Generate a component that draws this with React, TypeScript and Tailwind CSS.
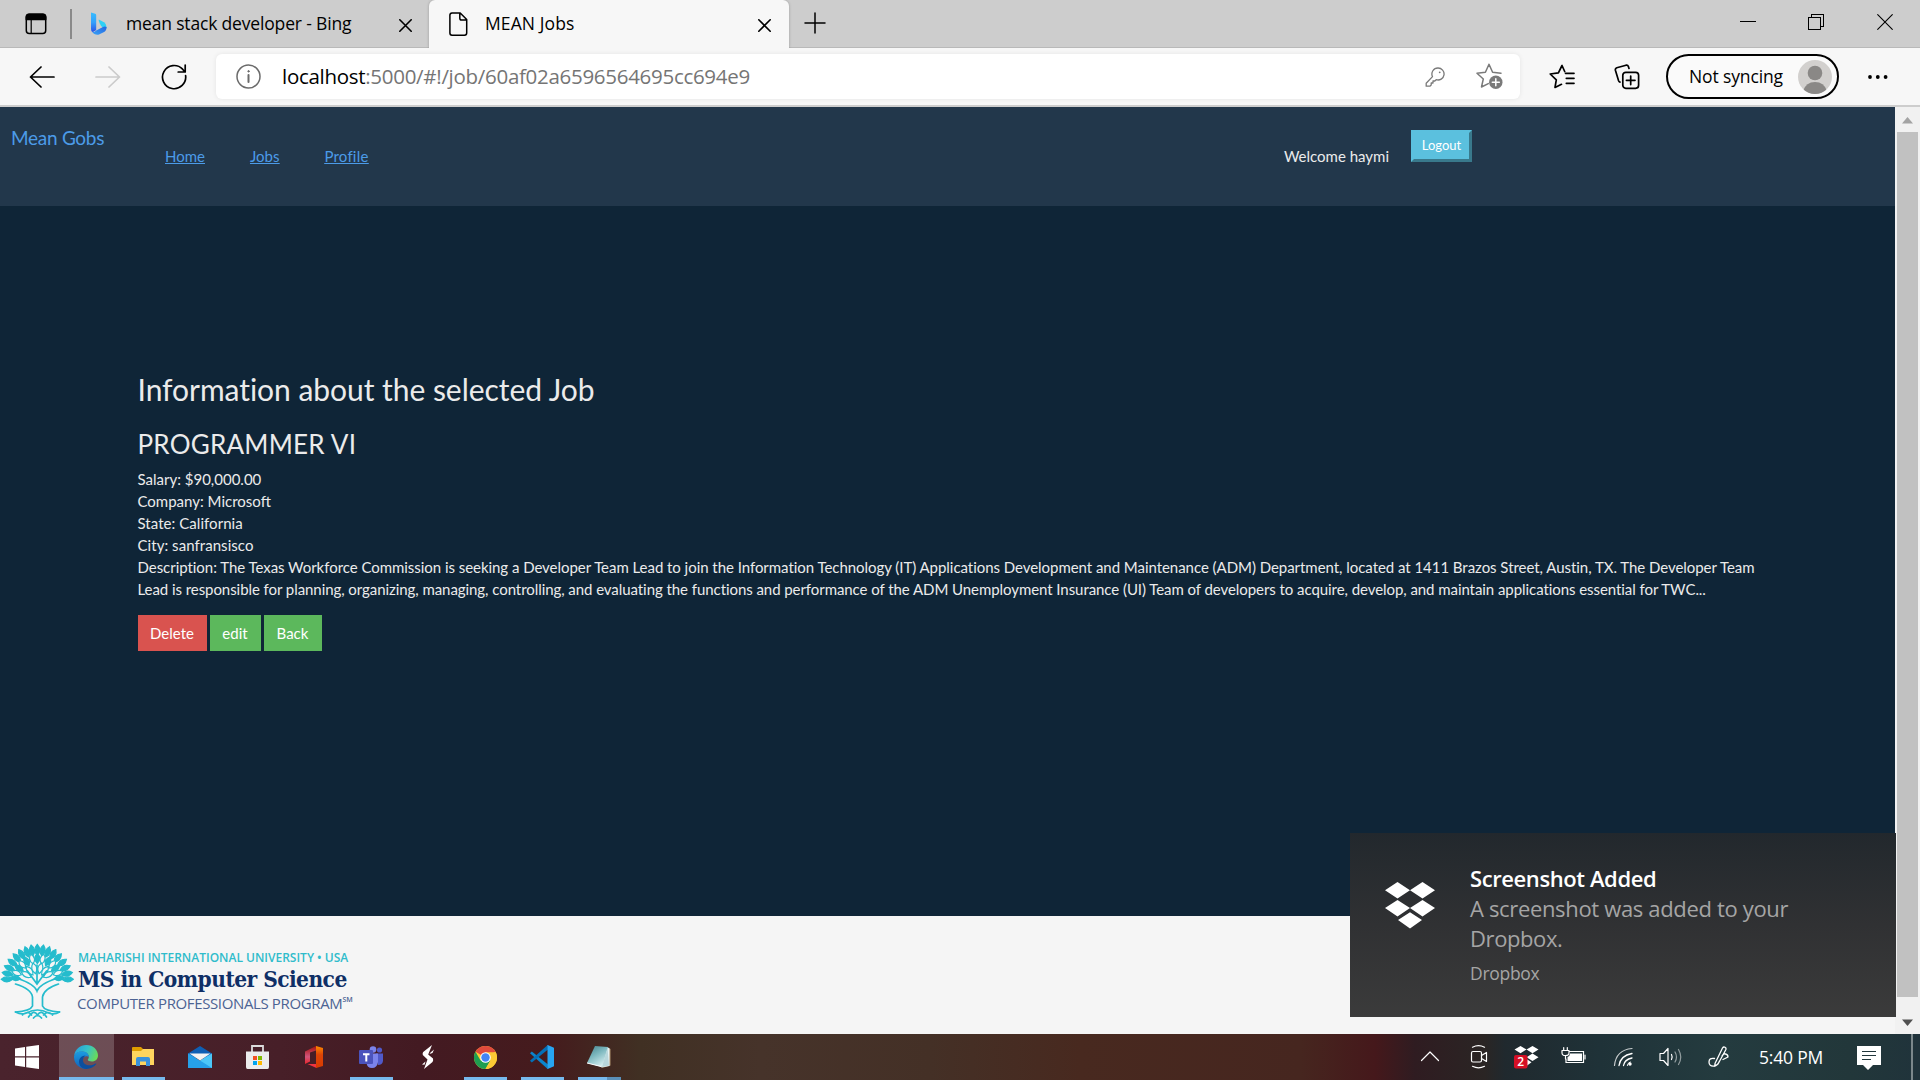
import type { ReactNode } from 'react';

type IconProps = { w: number; h: number; className?: string; children: ReactNode };

function Icon({ w, h, className = '', children }: IconProps) {
  return (
    <svg
      width={w}
      height={h}
      viewBox={`0 0 ${w} ${h}`}
      fill="none"
      stroke="currentColor"
      strokeWidth="1.5"
      strokeLinecap="round"
      strokeLinejoin="round"
      className={`block shrink-0 ${className}`}
    >
      {children}
    </svg>
  );
}

const CloseX = ({ className }: { className: string }) => (
  <Icon w={13} h={13} className={className}>
    <path d="M.8.8l11.4 11.4M12.2.8.8 12.2" strokeWidth="1.6" />
  </Icon>
);

function TabStrip() {
  return (
    <div className="flex h-[48px] shrink-0 bg-[#cdcdcd] text-black">
      <div className="flex h-full w-[429px] items-center border-b border-[#b9b9b9]">
        <Icon w={22} h={22} className="ml-[25px] mt-px">
          <rect x="1.3" y="1.3" width="19.4" height="19.2" rx="3" />
          <path d="M1.3 6.5V4a3 3 0 0 1 3-2.7h13.4a3 3 0 0 1 3 2.7v2.500z" fill="currentColor" />
          <path d="M6.2 7v13.500" strokeWidth="1.200" />
        </Icon>
        <div className="ml-[23px] h-[30px] w-[2px] bg-[#8a8a8a]" />
        <svg width="16" height="23" viewBox="0 0 16 23" className="ml-[19px] block shrink-0">
          <defs>
            <linearGradient id="bingStem" x1="0" y1="0" x2="0" y2="1">
              <stop offset="0" stopColor="#37bdff" />
              <stop offset=".5" stopColor="#33a0fb" />
              <stop offset="1" stopColor="#2a4fe6" />
            </linearGradient>
            <linearGradient id="bingFoot" x1="0" y1="1" x2="1" y2="0">
              <stop offset="0" stopColor="#3aa4f8" />
              <stop offset="1" stopColor="#2465e0" />
            </linearGradient>
          </defs>
          <path d="M0 .5 4.300 1.800Q5.200 2.200 5.200 3.400V18L1.600 20.300Q0 19.400 0 17z" fill="url(#bingStem)" />
          <path d="M7.800 7.600 13 10.300Q15.600 12 15.600 15.200 15 17.500 13 17.600L9.700 13.200Q7.200 9 7.800 7.600z" fill="#2fd0f5" />
          <path d="M15.600 15.200Q15.600 18.600 12.600 20.300L8 22.600Q3.500 23.500 1 19.600 3 20.600 5.200 18.400L11.500 15.200Q14 14 15.600 15.200z" fill="url(#bingFoot)" />
        </svg>
        <span className="ml-[19px] w-[273px] whitespace-nowrap pb-px text-[17.5px] tracking-[-0.17px]">mean stack developer - Bing</span>
        <CloseX className="mt-[3px]" />
      </div>
      <div className="flex h-full w-[360px] items-center rounded-t-[6px] bg-[#f7f7f7] shadow-[0_0_3px_rgba(0,0,0,0.25)] [clip-path:inset(0_-4px_0_-4px)]">
        <Icon w={19} h={24} className="ml-[20px]">
          <path d="M3 .9h8.200l6.500 6.700V21a2.200 2.200 0 0 1-2.200 2.200H3A2.200 2.200 0 0 1 .9 21V3A2.200 2.200 0 0 1 3 .9zM10.800 1v5.200a1.800 1.800 0 0 0 1.800 1.800h5" />
        </Icon>
        <span className="ml-[17px] w-[273px] pb-[2px] text-[17.5px] tracking-[0.1px]">MEAN Jobs</span>
        <CloseX className="mt-[2px]" />
      </div>
      <div className="flex h-full flex-1 border-b border-[#b9b9b9]">
        <Icon w={22} h={22} className="ml-[15px] mt-[12px]">
          <path d="M11 1v20M1 11h20" />
        </Icon>
        <Icon w={16} h={16} className="ml-auto mt-[14px]">
          <path d="M.5 7.500h15" strokeWidth="1" shapeRendering="crispEdges" />
        </Icon>
        <Icon w={16} h={16} className="ml-[52px] mt-[14px]">
          <path d="M.5 3.500h11.500v11.500H.5zM3.500 3.500V.5h11.500v11.500h-3" strokeWidth="1" strokeLinejoin="miter" shapeRendering="crispEdges" />
        </Icon>
        <Icon w={16} h={16} className="ml-[53px] mr-[27px] mt-[14px]">
          <path d="M.7.7l14.600 14.600M15.300.7.7 15.300" strokeWidth="1.100" />
        </Icon>
      </div>
    </div>
  );
}

const STAR_OPEN = 'M25 10.200 16.600 9.300 13 1.200 9.400 9.300 1 10.300 7.300 16 5.500 24 12.300 20.600';

function Toolbar() {
  return (
    <div className="flex h-[59px] shrink-0 items-center border-b-2 border-[#cdcdcd] bg-[#f7f7f7] text-black">
      <Icon w={26} h={22} className="ml-[29px]">
        <path d="M12 1 1.500 11 12 21M1.500 11H25" strokeWidth="1.700" />
      </Icon>
      <Icon w={26} h={22} className="ml-[40px] text-[#cbcbcb]">
        <path d="M14 1l10.500 10L14 21M24.500 11H1" strokeWidth="1.700" />
      </Icon>
      <Icon w={26} h={26} className="ml-[40px]">
        <path d="M24.600 11.500a11.600 11.600 0 1 1-3-6.300l2 2.300M24.200 1v7h-7" strokeWidth="1.700" />
      </Icon>
      <div className="ml-[29px] flex h-[45px] w-[1304px] items-center rounded-[6px] bg-white shadow-[0_0_5px_rgba(0,0,0,0.08)]">
        <Icon w={25} h={25} className="ml-[20px] text-[#6b6b6b]">
          <circle cx="12.500" cy="12.500" r="11.500" />
          <path d="M12.500 11v7" strokeWidth="2" />
          <circle cx="12.500" cy="7.300" r=".7" fill="currentColor" strokeWidth="1" />
        </Icon>
        <span className="ml-[21px] whitespace-nowrap text-[20.5px] tracking-[-0.29px] text-[#757575]">
          <span className="text-black">localhost</span>:5000/#!/job/60af02a6596564695cc694e9
        </span>
        <Icon w={20} h={20} className="ml-auto mt-px text-[#7a7a7a]">
          <path d="M13 1a6 6 0 1 1-1.800 11.700L9.800 14H8v2H6.200v2L4.900 19.200H1.200v-3L7.500 9.600A6 6 0 0 1 13 1z" strokeWidth="1.300" />
          <circle cx="14.700" cy="5.300" r=".9" fill="currentColor" stroke="none" />
        </Icon>
        <Icon w={27} h={27} className="ml-[31px] mr-[17px] text-[#7a7a7a]">
          <path d={STAR_OPEN} />
          <circle cx="19.800" cy="19.300" r="6.700" fill="currentColor" stroke="none" />
          <path d="M19.800 15.800v7M16.300 19.300h7" stroke="#fff" />
        </Icon>
      </div>
      <Icon w={27} h={26} className="ml-[29px]">
        <path d="M15.700 7.500 13 1.500 9.400 8.800 1.200 10 7.300 15.800 6 23.500l6.500-3.200M16.500 9.300H25M17.300 14.300H25M17.300 19.300H25" strokeWidth="1.700" />
      </Icon>
      <Icon w={26} h={26} className="ml-[38px]">
        <path d="M15 4.500 14.400 2.500Q13.800.8 12 1.200L2.800 3.800Q1 4.500 1.400 6.300l3.200 10.500Q5 18 6 18.200" strokeWidth="1.700" />
        <rect x="8.800" y="8.300" width="15.800" height="16" rx="3" strokeWidth="1.700" />
        <path d="M16.700 12v8.600M12.400 16.300H21" strokeWidth="1.700" />
      </Icon>
      <div className="ml-[26px] flex h-[45px] w-[173px] items-center rounded-full border-2 border-black bg-[#fafafa]">
        <span className="ml-[21px] w-[109px] whitespace-nowrap text-[17.5px] tracking-[-0.13px]">Not syncing</span>
        <svg width="34" height="34" viewBox="0 0 34 34" className="block shrink-0">
          <clipPath id="avatarClip"><circle cx="17" cy="17" r="17" /></clipPath>
          <g clipPath="url(#avatarClip)">
            <rect width="34" height="34" fill="#d2d0ce" />
            <circle cx="17" cy="13" r="7.300" fill="#8a8886" />
            <path d="M5 31Q8 22 17 22t12 9l-5 3H10z" fill="#8a8886" />
          </g>
        </svg>
      </div>
      <Icon w={22} h={6} className="ml-[28px]">
        <g fill="currentColor" stroke="none">
          <circle cx="3" cy="3" r="1.900" /><circle cx="10.800" cy="3" r="1.900" /><circle cx="18.600" cy="3" r="1.900" />
        </g>
      </Icon>
    </div>
  );
}

function NavBar() {
  return (
    <nav className="flex h-[99px] shrink-0 items-start bg-[#22374b] text-[15px] leading-[22px] text-[#ebebeb]">
      <a className="ml-[11px] mt-[21px] w-[154px] text-[19px] leading-[20px] tracking-[-0.28px] text-[#4c9be8]">Mean Gobs</a>
      <div className="mt-[38px] flex gap-[45px] text-[#4c9be8] underline">
        <a>Home</a>
        <a>Jobs</a>
        <a className="tracking-[0.2px]">Profile</a>
      </div>
      <span className="ml-auto mt-[38px] whitespace-nowrap">Welcome haymi</span>
      <button className="ml-[22px] mr-[423px] mt-[23px] h-[32px] w-[61px] border-[3px] border-b-[#39798c] border-l-[#5bc0de] border-r-[#39798c] border-t-[#5bc0de] bg-[#5bc0de] text-[13px] leading-[25px] text-white">
        <span className="block -mt-px">Logout</span>
      </button>
    </nav>
  );
}

function JobDetails() {
  return (
    <main className="flex h-[710px] shrink-0 flex-col bg-[#0f2537] pl-[137.500px] pt-[167px] text-[15px] leading-[22px] text-[#ebebeb]">
      <h3 className="text-[30px] leading-[33px] tracking-[-0.04px]">Information about the selected Job</h3>
      <h4 className="mt-[24px] text-[26px] leading-[28px] tracking-[0.24px]">PROGRAMMER VI</h4>
      <div className="mt-[10px] whitespace-nowrap">
        <p>Salary: $90,000.00</p>
        <p>Company: Microsoft</p>
        <p className="tracking-[0.05px]">State: California</p>
        <p className="tracking-[0.05px]">City: sanfransisco</p>
        <p>
          <span className="tracking-[-0.042px]">
            Description: The Texas Workforce Commission is seeking a Developer Team Lead to join the Information Technology (IT) Applications Development and Maintenance (ADM) Department, located at 1411 Brazos Street, Austin, TX. The Developer Team
          </span>
          <br />
          <span className="tracking-[-0.063px]">
            Lead is responsible for planning, organizing, managing, controlling, and evaluating the functions and performance of the ADM Unemployment Insurance (UI) Team of developers to acquire, develop, and maintain applications essential for TWC...
          </span>
        </p>
      </div>
      <div className="mt-[15px] flex gap-[3px] text-white">
        <button className="h-[36px] w-[69px] bg-[#d9534f]">Delete</button>
        <button className="h-[36px] w-[51px] bg-[#5cb85c]">edit</button>
        <button className="h-[36px] w-[58px] bg-[#5cb85c]">Back</button>
      </div>
    </main>
  );
}

type Leaf = { a: number; r: number; len: number; hollow?: boolean };

const LEAVES: Leaf[] = [
  ...[-88, -77, -66, -54, -42, -31, -20, -10, 0, 10, 20, 31, 42, 54, 66, 77, 88].map((a) => ({ a, r: 25, len: 11 })),
  ...[-84, -70, -56, -43, -29, -14, 0, 14, 29, 43, 56, 70, 84].map((a, i) => ({ a, r: 17, len: 10, hollow: i % 2 === 1 })),
  ...[-62, -38, -14, 14, 38, 62].map((a) => ({ a, r: 7, len: 11, hollow: true })),
];

function TreeLogo() {
  return (
    <svg width="74" height="78" viewBox="0 0 74 78" className="block shrink-0">
      <g stroke="#25bccd" fill="#25bccd" strokeWidth="1.200">
        {LEAVES.map(({ a, r, len, hollow }, i) => (
          <path
            key={i}
            transform={`translate(37.300 38.500) rotate(${a}) translate(0 ${-r})`}
            d={`M0 0Q-5 ${-len / 2} 0 ${-len}Q5 ${-len / 2} 0 0z`}
            fill={hollow ? '#f5f5f5' : '#25bccd'}
          />
        ))}
      </g>
      <g fill="none" stroke="#25bccd" strokeWidth="1.700" strokeLinecap="round" transform="translate(.5 0)">
        <path d="M15 42Q31 47 32 55V64Q30 69 15 70M58 42Q43 47 42 55V64Q44 69 59 70" />
        <path d="M16 36Q34 42 36.500 49 39 42 57 36M27 29l9.500 13 9.500-13M36.500 40V23" />
        <path d="M15 70q6 3 11 1 11-6 22 0 6 2 11-1M22 73q5-5 9 0m-3 2q5-8 9-2 4-6 9 2m-3-2q5-5 9 0M33 76q4-5 8 0" />
      </g>
    </svg>
  );
}

function Footer() {
  return (
    <footer className="flex h-[118px] shrink-0 bg-[#f5f5f5] pt-[26px]">
      <TreeLogo />
      <div className="ml-[4px] flex flex-col whitespace-nowrap">
        <span className="mt-[8px] text-[12px] font-semibold leading-[16px] text-[#2fbccb]">MAHARISHI INTERNATIONAL UNIVERSITY • USA</span>
        <span className="font-['DejaVu_Serif_Condensed','DejaVu_Serif'] text-[22.5px] font-bold leading-[26px] tracking-[-0.55px] text-[#0f2f66] [font-stretch:condensed]">
          MS in Computer Science
        </span>
        <span className="-ml-px mt-px flex text-[15px] leading-[20px] tracking-[-0.37px] text-[#4c6393]">
          COMPUTER PROFESSIONALS PROGRAM
          <span className="text-[7px] font-semibold leading-[14px] tracking-normal">SM</span>
        </span>
      </div>
    </footer>
  );
}

function Scrollbar() {
  return (
    <div className="flex w-[25px] shrink-0 flex-col items-center bg-[#f1f1f1]">
      <Icon w={11} h={8} className="mt-[9px]">
        <path d="M0 7.500 5.500 1 11 7.500z" fill="#a3a3a3" stroke="none" />
      </Icon>
      <div className="mt-[8px] h-[865px] w-[21px] bg-[#c1c1c1]" />
      <Icon w={11} h={8} className="mt-[22px]">
        <path d="M0 .5h11L5.500 7z" fill="#505050" stroke="none" />
      </Icon>
    </div>
  );
}

function Toast() {
  return (
    <div className="absolute bottom-[63px] right-[24px] flex h-[184px] w-[546px] bg-linear-to-b from-[#22282d] via-[#303133] to-[#3b3b3b]">
      <svg width="50" height="47" viewBox="0 0 50 47" className="ml-[35px] mt-[49px] block shrink-0 fill-white">
        <path d="M12.500 0 25 8.200 12.500 16.400 0 8.200zM37.500 0 50 8.200 37.500 16.400 25 8.200zM12.500 18 25 26 12.500 34.500 0 26zM37.500 18 50 26 37.500 34.500 25 26zM25 30.200 37 38 25 46.500 13 38z" />
      </svg>
      <div className="ml-[35px] mt-[30px] whitespace-nowrap text-[22px] leading-[30px] text-[#a5a5a5]">
        <p className="font-semibold tracking-[-0.4px] text-white">Screenshot Added</p>
        <p className="tracking-[-0.34px]">A screenshot was added to your</p>
        <p className="tracking-[-0.4px]">Dropbox.</p>
        <p className="mt-[7px] text-[17.500px] leading-[26px] tracking-[-0.3px]">Dropbox</p>
      </div>
    </div>
  );
}

const WindowsIcon = () => (
  <Icon w={24} h={24}>
    <path d="M0 3.400 10 2v9.300H0zM11.200 1.800 24 0v11.300H11.200zM0 12.500h10V22L0 20.600zM11.200 12.500H24V24l-12.800-1.800z" fill="#fff" stroke="none" />
  </Icon>
);

const EdgeIcon = () => (
  <svg width="24" height="24" viewBox="0 0 24 24">
    <defs>
      <linearGradient id="edgeTop" x1="0" y1=".3" x2="1" y2=".6">
        <stop offset="0" stopColor="#2a9fd8" /><stop offset=".5" stopColor="#35c1c9" /><stop offset="1" stopColor="#6cdc55" />
      </linearGradient>
      <linearGradient id="edgeSide" x1="0" y1="0" x2="0" y2="1">
        <stop offset="0" stopColor="#1b9de2" /><stop offset="1" stopColor="#1161b8" />
      </linearGradient>
    </defs>
    <path d="M.2 10.500C1 4.500 6 0 12.200 0 19 0 24 4.800 24 10.500c0 3.800-2.800 6-6 6-2.500 0-4.200-.8-4.200-1.700 0-.8 1-1.100 1-2.900 0-2.600-2.400-5.400-6.500-5.400-4 0-7 2-8.100 4z" fill="url(#edgeTop)" />
    <path d="M0 12C0 8.500 4 6.200 7.800 6.200c4.500 0 7.200 3 7 5.800C13 9.800 8.200 12 8.200 16c0 4 3 7 6.300 7.700A12 12 0 0 1 0 12z" fill="url(#edgeSide)" />
    <path d="M11.500 10.500C9.500 12 9 13.500 9 15.500c0 3 3 4.800 6.300 4.800 3 0 5-1 6.400-1.800.5-.2.8.2.5.6-2 3-5.700 4.900-9.700 4.900C8 24 5 20.500 5 16.800c0-3.500 3-6.300 6.500-6.300z" fill="#0c4f9e" />
  </svg>
);

const FolderIcon = () => (
  <svg width="22" height="20" viewBox="0 0 22 20">
    <path d="M0 1Q0 0 1 0h8l2 2v4H0z" fill="#e09d00" />
    <path d="M0 4h9l2-2h11v16H0z" fill="#ffd45e" />
    <path d="M4 19v-7q0-2 2-2h10q2 0 2 2v7h-4v-4.500H8V19z" fill="#3a91dc" />
  </svg>
);

const MailIcon = () => (
  <svg width="24" height="22" viewBox="0 0 24 22">
    <path d="M0 7.500 12 0l12 7.500V12H0z" fill="#0f5fb4" />
    <path d="M0 7.500 12 15l12-7.500V22H0z" fill="#2aa3ea" />
    <path d="M0 7.500 24 22H0z" fill="#26a0e8" />
    <path d="M24 7.500V22L12 14.500z" fill="#4cc6f7" />
    <path d="M1.500 7.500h21L12 14.500z" fill="#f3f3f3" />
  </svg>
);

const StoreIcon = () => (
  <svg width="23" height="24" viewBox="0 0 23 24">
    <path d="M6 8V1h11v7" fill="none" stroke="#dcdcdc" strokeWidth="1.800" />
    <path d="M0 6.500h23V22q0 2-1.500 2h-20Q0 24 0 22z" fill="#ececec" />
    <path d="M7 11h4v4H7z" fill="#f25022" /><path d="M12 11h4v4h-4z" fill="#7fba00" />
    <path d="M7 16h4v4H7z" fill="#00a4ef" /><path d="M12 16h4v4h-4z" fill="#ffb900" />
  </svg>
);

const OfficeIcon = () => (
  <svg width="18" height="22" viewBox="0 0 18 22">
    <defs>
      <linearGradient id="officeLeft" x1="0" y1="0" x2="0" y2="1">
        <stop offset="0" stopColor="#a6120d" /><stop offset=".6" stopColor="#d0557c" /><stop offset="1" stopColor="#e8262a" />
      </linearGradient>
      <linearGradient id="officeRight" x1="0" y1="0" x2="0" y2="1">
        <stop offset="0" stopColor="#ff8a00" /><stop offset=".4" stopColor="#dc4406" /><stop offset="1" stopColor="#d83b01" />
      </linearGradient>
    </defs>
    <path d="M0 5.500 11 0v4.500L5 6.500v9L0 18z" fill="url(#officeLeft)" />
    <path d="M2.500 18 11.500 18V22z" fill="#ef3340" />
    <path d="M11 0l7 2v18l-7 2z" fill="url(#officeRight)" />
  </svg>
);

const TeamsIcon = () => (
  <svg width="24" height="22" viewBox="0 0 24 22">
    <circle cx="20.500" cy="4" r="2.600" fill="#5059c9" />
    <circle cx="14" cy="3.500" r="3.300" fill="#7b83eb" />
    <path d="M17 7.500h7V15q-.5 4-5 4z" fill="#5059c9" />
    <path d="M8 7.500h11V16q-1 6-6 6t-5.500-5z" fill="#7b83eb" />
    <rect y="4" width="14" height="14" rx="1" fill="#4b53bc" />
    <path d="M4 7.300h6.500v1.900H8.300v6.300h-2V9.200H4z" fill="#fff" />
  </svg>
);

const BoltIcon = () => (
  <svg width="12" height="24" viewBox="0 0 12 24" fill="#fff">
    <path d="M10 0 1.200 7Q.3 8 .8 10L5.500 14.500 2 24l8.500-7Q11.500 15.500 11 13.500L6.200 9.500z" />
    <path d="M12 4.500 8.500 7.500l-1 1.500L10.500 8zM0 19.500l3.500-3-1 3.300z" />
  </svg>
);

const ChromeIcon = () => (
  <svg width="23" height="23" viewBox="0 0 24 24">
    <circle cx="12" cy="12" r="12" fill="#fcc934" />
    <path d="M12 12 1.600 6A12 12 0 0 1 22.400 6z" fill="#e04a3c" />
    <path d="M1.600 6 6.800 15 12 12l5.200 3L12 24A12 12 0 0 1 1.600 6z" fill="#1e9e50" />
    <path d="M12 6.500h10.700A12 12 0 0 1 12 24l5-9z" fill="#fcc934" />
    <circle cx="12" cy="12" r="5.500" fill="#fff" />
    <circle cx="12" cy="12" r="4.400" fill="#4285f4" />
  </svg>
);

const CodeIcon = () => (
  <svg width="24" height="24" viewBox="0 0 24 24">
    <path d="M0 8.200 1.800 6.500 18 19.500 17.700 24z" fill="#0b84cd" />
    <path d="M0 15.800l1.800 1.700L18 4.500 17.700 0z" fill="#0470b8" />
    <path d="M17.700 0 24 2.800v18.400L17.700 24q-.8-.4-.2-1.200V1.200q-.6-.8.2-1.200z" fill="#27a5f2" />
  </svg>
);

const NotepadIcon = () => (
  <svg width="24" height="22" viewBox="0 0 24 22">
    <defs>
      <linearGradient id="notePage" x1="0" y1="0" x2=".6" y2="1">
        <stop offset="0" stopColor="#3e7f8a" /><stop offset=".5" stopColor="#7fb9c0" /><stop offset="1" stopColor="#d5eef0" />
      </linearGradient>
    </defs>
    <path d="M21 1.500 23.500 3v16.500L15 22z" fill="#a98f6d" />
    <path d="M20 1l2.500 1.500V20L14 21.500z" fill="#e8f2f4" />
    <path d="M8 0l13 1-6 20L0 17z" fill="url(#notePage)" />
    <path d="M20.500 1.500 22 19.500l-7 1.500z" fill="#b8d7dc" />
    <path d="M0 17l14 3.500" stroke="#fff" strokeWidth="1" />
  </svg>
);

type TaskApp = { name: string; icon: ReactNode; state: 'idle' | 'open' | 'active' | 'stacked' };

const APPS: TaskApp[] = [
  { name: 'Edge', icon: <EdgeIcon />, state: 'active' },
  { name: 'Explorer', icon: <FolderIcon />, state: 'open' },
  { name: 'Mail', icon: <MailIcon />, state: 'idle' },
  { name: 'Store', icon: <StoreIcon />, state: 'idle' },
  { name: 'Office', icon: <OfficeIcon />, state: 'idle' },
  { name: 'Teams', icon: <TeamsIcon />, state: 'open' },
  { name: 'Bolt', icon: <BoltIcon />, state: 'idle' },
  { name: 'Chrome', icon: <ChromeIcon />, state: 'open' },
  { name: 'Code', icon: <CodeIcon />, state: 'open' },
  { name: 'Notepad', icon: <NotepadIcon />, state: 'stacked' },
];

function TaskbarApp({ app }: { app: TaskApp }) {
  return (
    <div className={`flex w-[55px] flex-col items-center ${app.state === 'active' ? 'bg-white/20' : ''}`}>
      <div className="flex h-[43px] items-center pr-px pt-[3px]">{app.icon}</div>
      {app.state === 'active' && <div className="h-[3px] w-full bg-[#76b9ed]" />}
      {app.state === 'open' && <div className="h-[3px] w-[43px] bg-[#76b9ed]" />}
      {app.state === 'stacked' && (
        <div className="flex h-[3px] w-[43px]">
          <div className="w-[29px] bg-[#76b9ed]" />
          <div className="w-[14px] bg-[#5a8fb8]" />
        </div>
      )}
    </div>
  );
}

function Tray() {
  return (
    <div className="ml-auto flex items-center text-white">
      <Icon w={20} h={12} className="mt-[-2px]">
        <path d="M1.500 10.500 10 2l8.500 8.500" strokeWidth="1.200" />
      </Icon>
      <Icon w={18} h={24} className="ml-[30px]">
        <rect x="1.500" y="6.500" width="10" height="10.500" rx="1.500" strokeWidth="1.200" />
        <path d="M11.500 10.500 16.500 7.500v9l-5-3M2.500 2.200Q8.500-.8 14.500 2.200M2.500 21.300q6 3 12 0" strokeWidth="1.200" />
      </Icon>
      <svg width="25" height="24" viewBox="0 0 25 24" className="ml-[26px] block shrink-0">
        <path d="M6.500 1 12.500 4.500 6.500 8.200.5 4.500zM18.500 1l6 3.500-6 3.700-6-3.700zM18.500 8.500l6 3.700-6 3.700-6-3.700zM12.500 14l5 3.300-5 3.700z" fill="#fff" />
        <rect x="0" y="10" width="13.500" height="13.500" rx="2" fill="#d50f25" />
        <text x="6.700" y="21" textAnchor="middle" fontSize="12" fontWeight="600" fill="#fff">2</text>
      </svg>
      <Icon w={26} h={20} className="ml-[22px] mt-[-2px]">
        <path d="M8.500 5.500H22.500V16.500H5V13" strokeWidth="1.200" strokeLinejoin="miter" />
        <path d="M9 7.500h12v7.500H6.500V11Q9 10 9 7.500z" fill="currentColor" stroke="none" />
        <path d="M24 9v4M2.700 1.500V4M6.300 1.500V4M1 4.500h7V7q0 2.500-3.500 2.500T1 7zM4.500 9.500v3.500" strokeWidth="1.200" />
      </Icon>
      <Icon w={21} h={20} className="ml-[26px]">
        <path d="M1.500 18.500Q3 3 19 1.500" strokeWidth="1.200" opacity=".75" />
        <path d="M6 18.500Q7.500 8.500 19 6.500M10.500 18.500Q11.500 12.500 19 11" strokeWidth="1.300" />
        <circle cx="17" cy="17" r="1.700" fill="currentColor" stroke="none" />
        <path d="M14.300 18.500q.2-2.500 3-3.500" strokeWidth="1" />
      </Icon>
      <Icon w={24} h={20} className="ml-[25px]">
        <path d="M1 6.500h3.500L9 1.500v17l-4.500-5H1z" strokeWidth="1.200" />
        <path d="M12.500 7.500q1.300 2.500 0 5" strokeWidth="1.200" />
        <path d="M16 5q3 5 0 10M19.500 2.500q4.500 7.500 0 15" strokeWidth="1.200" opacity=".5" />
      </Icon>
      <Icon w={22} h={22} className="ml-[25px]">
        <path d="M6.500 12.500Q1 11.500 1 16t5 4q4-.5 5.500-5M7 17.500 14.500 2q1-1.500 2.500-.7t.8 2.400L10 18l-3.200 2.200zM14 10q1-2.500 3.500-2T20 11l-5 2.500" strokeWidth="1.300" />
      </Icon>
      <span className="ml-[29px] w-[64px] whitespace-nowrap text-[17.500px] tracking-[-0.2px]">5:40 PM</span>
      <Icon w={24} h={24} className="ml-[34px] mt-px">
        <path d="M0 0h24v19h-8l-5 5-5-5H0z" fill="#fff" stroke="none" />
        <path d="M5 5.500h14M5 9.500h14M5 13.500h9" stroke="#22373c" strokeWidth="1.200" strokeLinecap="butt" />
      </Icon>
      <div className="ml-[30px] mr-[7px] h-[46px] w-[2px] bg-[#7b878b]" />
    </div>
  );
}

function Taskbar() {
  return (
    <div className="flex h-[46px] shrink-0 bg-[linear-gradient(90deg,#4a232d_0px,#471f28_280px,#431a22_420px,#451b1d_550px,#403023_640px,#46332a_760px,#443026_930px,#48291f_1080px,#46261f_1300px,#45181b_1375px,#2f1c21_1415px,#2a2524_1485px,#20292e_1505px,#1f3238_1600px,#243b3f_1720px,#22373a_1850px,#20333b_1920px)]">
      <div className="mr-[5px] flex w-[54px] items-center justify-center">
        <WindowsIcon />
      </div>
      <div className="flex gap-[2px]">
        {APPS.map((app) => (
          <TaskbarApp key={app.name} app={app} />
        ))}
      </div>
      <Tray />
    </div>
  );
}

export default function App() {
  return (
    <div className="relative flex h-[1080px] w-[1920px] flex-col overflow-hidden font-['Open_Sans',sans-serif]">
      <TabStrip />
      <Toolbar />
      <div className="flex h-[927px] shrink-0">
        <div className="flex w-[1895px] flex-col font-[Lato,sans-serif]">
          <NavBar />
          <JobDetails />
          <div className="font-['Open_Sans',sans-serif]">
            <Footer />
          </div>
        </div>
        <Scrollbar />
      </div>
      <Taskbar />
      <Toast />
    </div>
  );
}
